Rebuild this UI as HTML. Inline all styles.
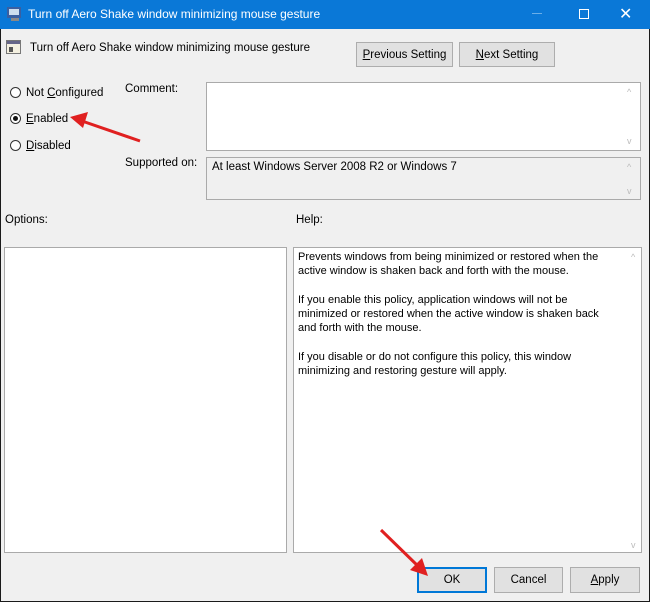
<!DOCTYPE html>
<html><head><style>
body{margin:0;width:650px;height:603px;overflow:hidden;font-family:"Liberation Sans",sans-serif;font-size:11.5px;color:#000;}
.win{position:absolute;left:0;top:0;width:648px;height:601px;background:#f0f0f0;border:1px solid #1a1a1a;border-top:none;}
.title{position:absolute;left:0;top:0;width:650px;height:29px;background:#0a78d7;color:#fff;font-size:12px;}
.a{position:absolute;white-space:nowrap;}
.btn{position:absolute;background:#e1e1e1;border:1px solid #adadad;text-align:center;box-sizing:border-box;line-height:24px;}
.box{position:absolute;background:#fff;border:1px solid #aaa;box-sizing:border-box;}
.rad{position:absolute;width:11px;height:11px;border:1px solid #333;border-radius:50%;background:#fff;box-sizing:border-box;}
.sb{position:absolute;color:#bbb;font-size:9px;}
</style></head><body>
<div class="win"></div>
<div class="title">
<svg class="a" style="left:7px;top:7px" width="16" height="14"><rect x="0" y="0" width="14" height="11" fill="#3a5fa0"/><rect x="2" y="2" width="10" height="6" fill="#cde"/><rect x="4" y="11" width="8" height="3" fill="#888"/></svg>
<div class="a" style="left:28px;top:7px">Turn off Aero Shake window minimizing mouse gesture</div>
<div class="a" style="left:532px;top:13px;width:10px;height:1px;background:#6aaee8"></div>
<div class="a" style="left:579px;top:9px;width:8px;height:8px;border:1px solid #fff"></div>
<div class="a" style="left:619px;top:4px;font-size:16px">✕</div>
</div>
<svg class="a" style="left:6px;top:40px" width="16" height="15"><rect x="0.5" y="0.5" width="14" height="13" fill="#f4f0e0" stroke="#777"/><rect x="1" y="1" width="13" height="3" fill="#668"/><rect x="3" y="7" width="4" height="5" fill="#555"/></svg>
<div class="a" style="left:30px;top:42px">Turn off Aero Shake window minimizing mouse gesture</div>
<div class="btn" style="left:356px;top:42px;width:97px;height:25px"><u>P</u>revious Setting</div>
<div class="btn" style="left:459px;top:42px;width:96px;height:25px"><u>N</u>ext Setting</div>
<div class="rad" style="left:10px;top:87px"></div><div class="a" style="left:26px;top:87px">Not <u>C</u>onfigured</div>
<div class="rad" style="left:10px;top:113px"><div style="position:absolute;left:2px;top:2px;width:5px;height:5px;border-radius:50%;background:#111"></div></div><div class="a" style="left:26px;top:113px"><u>E</u>nabled</div>
<div class="rad" style="left:10px;top:140px"></div><div class="a" style="left:26px;top:140px"><u>D</u>isabled</div>
<div class="a" style="left:125px;top:83px">Comment:</div>
<div class="box" style="left:206px;top:82px;width:435px;height:69px"></div>
<div class="sb" style="left:627px;top:87px">^</div><div class="sb" style="left:627px;top:136px">v</div>
<div class="a" style="left:125px;top:157px">Supported on:</div>
<div class="box" style="left:206px;top:157px;width:435px;height:43px;background:#f0f0f0"></div>
<div class="a" style="left:212px;top:161px">At least Windows Server 2008 R2 or Windows 7</div>
<div class="sb" style="left:627px;top:162px">^</div><div class="sb" style="left:627px;top:186px">v</div>
<div class="a" style="left:5px;top:214px">Options:</div>
<div class="a" style="left:296px;top:214px">Help:</div>
<div class="box" style="left:4px;top:247px;width:283px;height:306px"></div>
<div class="box" style="left:293px;top:247px;width:349px;height:306px"></div>
<div class="sb" style="left:631px;top:252px">^</div><div class="sb" style="left:631px;top:540px">v</div>
<div class="a" style="left:298px;top:250px;line-height:14.3px;font-size:11px">Prevents windows from being minimized or restored when the<br>active window is shaken back and forth with the mouse.<br><br>If you enable this policy, application windows will not be<br>minimized or restored when the active window is shaken back<br>and forth with the mouse.<br><br>If you disable or do not configure this policy, this window<br>minimizing and restoring gesture will apply.</div>
<div class="btn" style="left:417px;top:567px;width:70px;height:26px;border:2px solid #0078d7;line-height:23px">OK</div>
<div class="btn" style="left:494px;top:567px;width:69px;height:26px">Cancel</div>
<div class="btn" style="left:570px;top:567px;width:70px;height:26px"><u>A</u>pply</div>
<svg class="a" style="left:0;top:0" width="650" height="603">
<line x1="140" y1="141" x2="82" y2="121" stroke="#e02020" stroke-width="3"/>
<polygon points="70,117 88,112 83,128" fill="#e02020"/>
<line x1="381" y1="530" x2="420" y2="568" stroke="#e02020" stroke-width="3"/>
<polygon points="428,576 410,570 422,558" fill="#e02020"/>
</svg>
</body></html>
